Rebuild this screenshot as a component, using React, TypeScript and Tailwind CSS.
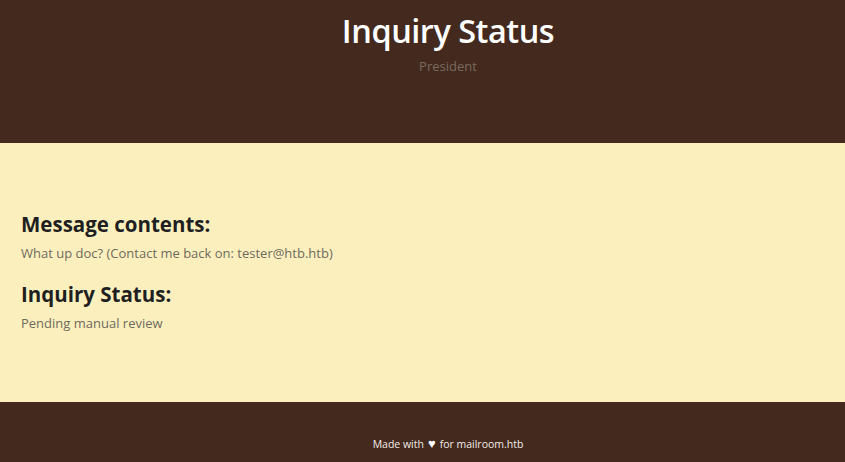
import React from 'react';

export default function App() {
  return (
    <div className="min-h-[462px] flex flex-col" style={{ fontFamily: '"Open Sans", sans-serif' }}>
      <header className="bg-[#43291e] h-[143px] flex flex-col items-center pt-[9px] pl-[51px]">
        <h1 className="text-white text-[32.5px] font-semibold leading-[44px] tracking-[-0.5px]">Inquiry Status</h1>
        <p className="text-[#7a6a5e] text-[13px] leading-[18px] mt-[4px]">President</p>
      </header>
      <main className="bg-[#fbf0bd] h-[259px] px-[21px] pt-[67px]">
        <h2 className="text-[#1f1f22] text-[20.5px] font-bold leading-[28px]">Message contents:</h2>
        <p className="text-[#6f6a60] text-[13px] leading-[20px] mt-[5px]">What up doc? (Contact me back on: tester@htb.htb)</p>
        <h2 className="text-[#1f1f22] text-[20.5px] font-bold leading-[28px] mt-[17px]">Inquiry Status:</h2>
        <p className="text-[#6f6a60] text-[13px] leading-[20px] mt-[5px]">Pending manual review</p>
      </main>
      <footer className="bg-[#43291e] h-[60px] flex items-center justify-center pt-[26px] pl-[51px]">
        <p className="text-[#f3ece6] text-[10.5px] flex items-baseline gap-[4px]">
          <span>Made with</span>
          <span className="text-white text-[13px] leading-none">♥</span>
          <span>for mailroom.htb</span>
        </p>
      </footer>
    </div>
  );
}
